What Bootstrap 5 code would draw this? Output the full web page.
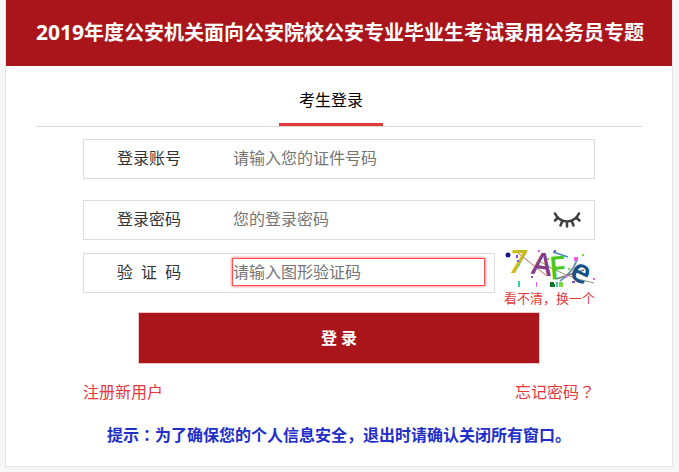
<!DOCTYPE html>
<html lang="zh-CN">
<head>
<meta charset="utf-8">
<meta name="viewport" content="width=device-width, initial-scale=1">
<title>考生登录</title>
<link href="https://cdn.jsdelivr.net/npm/bootstrap@5.3.0/dist/css/bootstrap.min.css" rel="stylesheet">
<style>
body { background: #f6f6f6; font-family: "Open Sans", "Noto Sans CJK SC", sans-serif; font-size: 16px; line-height: 24px; color: #333; }
.mid { font-family: "Noto Sans CJK TC", sans-serif; line-height: 20px; }
.login-panel { margin: 0 6px 4px 5px; background: #fff; border: 1px solid #e6e6e6; border-top: 0; }
.login-head { background: #aa151b; padding: 18px 20px 18px 30px; }
.login-head h1 { font-size: 20px; line-height: 30px; }
.year { font-size: 21px; line-height: 20px; }
.tab-line { margin: 0 30px; padding-top: 20px; border-bottom: 1px solid #d9d9d9; }
.tab-item { padding: 2px 20px 11px; color: #000; border-bottom: 3px solid #e4393c; }
.login-form { margin: 12px 77px 0; }
.field { height: 40px; border: 1px solid #ddd; background: #fff; padding: 0 9px 2px 0; }
.field label { width: 148px; flex: none; padding-right: 18px; text-align: center; white-space: pre; }
.field input { height: 28px; min-width: 0; border: 1px solid transparent; outline: 0; padding: 0; background: transparent; }
.field input::placeholder { color: #757575; opacity: 1; }
.field .alert-input { border-color: #ff4d4d; box-shadow: 0 0 3px #ff4d4d; }
.gap-account { margin-bottom: 21px; }
.gap-password { margin-bottom: 8px; }
.eye-btn { border: 0; background: none; padding: 0; width: 36px; height: 28px; line-height: 0; }
.captcha-row { gap: 9px; }
.captcha-row .field { margin-top: 5px; }
.captcha-side { width: 91px; flex: none; }
.captcha-side svg { display: block; overflow: visible; }
.captcha-side a { display: block; font-size: 13px; line-height: 20px; white-space: nowrap; }
.red-link { color: #e4393c; text-decoration: none; }
.login-btn { margin: 4px 55px 0; height: 52px; background: #aa151b; border: 1px solid #efc6c8; color: #fff; font-weight: 700; }
.login-links { margin-top: 16px; }
.login-tip { margin: 19px 0 0; padding-bottom: 19px; color: #222ec8; font-weight: 700; }
</style>
<script src="https://cdn.jsdelivr.net/npm/bootstrap@5.3.0/dist/js/bootstrap.bundle.min.js"></script>
</head>
<body>
<main class="login-panel">
  <header class="login-head text-white">
    <h1 class="fw-bold m-0 text-nowrap"><span class="year">2019</span>年度公安机关面向公安院校公安专业毕业生考试录用公务员专题</h1>
  </header>
  <div class="tab-line d-flex justify-content-center">
    <div class="tab-item me-3">考生登录</div>
  </div>
  <form class="login-form">
    <div class="field gap-account d-flex align-items-center">
      <label for="account">登录账号</label>
      <input id="account" class="flex-fill" type="text" placeholder="请输入您的证件号码">
    </div>
    <div class="field gap-password d-flex align-items-center">
      <label for="password">登录密码</label>
      <input id="password" class="flex-fill" type="password" placeholder="您的登录密码">
      <button class="eye-btn" type="button" aria-label="显示密码">
        <svg width="30" height="20" viewBox="0 0 30 20" fill="none" stroke="#3c3c3c" stroke-width="2.5" stroke-linecap="round"><path d="M3 4.500C8 15 22 15 27 4.500M6 8.500L3 11.500M10.500 11.500L8.500 16.500M15 12.500V17.500M19.500 11.500L21.500 16.500M24 8.500L27.500 11.500"/></svg>
      </button>
    </div>
    <div class="captcha-row d-flex align-items-start">
      <div class="field flex-fill d-flex align-items-center">
        <label for="code">验  证  码</label>
        <input id="code" class="alert-input flex-fill" type="text" placeholder="请输入图形验证码">
      </div>
      <div class="captcha-side">
        <svg width="91" height="40" viewBox="0 0 91 40" role="img" aria-label="验证码图片">
          <g fill="none" stroke-width="1">
            <path stroke="#b86b62" d="M14 5L43 28"/>
            <path stroke="#8f9463" d="M35 13Q60 29 90 35"/>
            <path stroke="#3a8fa8" stroke-width="1.500" d="M49 4L64 9"/>
            <path stroke="#6698b5" stroke-width="2" d="M73 12Q68 25 56 33"/>
            <path stroke="#777" stroke-width="1.500" d="M52 31L80 22"/>
          </g>
          <g font-family="Open Sans, sans-serif" font-weight="600">
            <text x="5" y="25" font-size="32" font-style="italic" fill="#c5bd1c">7</text>
            <text x="28" y="27" font-size="31" fill="#853d86" transform="rotate(8 38 16)">A</text>
            <text x="45" y="31" font-size="32" fill="#49c91d" transform="rotate(-5 53 20)">F</text>
            <text x="66" y="34" font-size="33" fill="#174f87" transform="rotate(25 75 27)">e</text>
          </g>
          <circle cx="4" cy="7" r="2.500" fill="#18188c"/>
          <path fill="#8050db" d="M12 7h2v3h-2zM27 28h2v2h-2zM50 2h2v2h-2zM68 33h3v2h-3zM13 12h2v2h-2zM30 20h3v1h-3z"/>
          <path fill="#e65de8" d="M70 9h4v4h-4zM34 2h2v2h-2zM61 27h2v3h-2zM32 34h1v5h-1zM89 30h2v2h-2z"/>
          <path fill="#79da42" d="M14 16h2v2h-2zM78 6h2v2h-2zM64 20h2v2h-2zM55 34h4v5h-4zM43 10h2v2h-2z"/>
          <path fill="#187525" d="M46 34h4v5h-4zM50 36h1v3h-1z"/>
          <path fill="#35d3a6" d="M14 33h2v6h-2zM52 34h2v5h-2z"/>
        </svg>
        <a class="red-link" href="#">看不清，换一个</a>
      </div>
    </div>
    <div class="d-flex">
      <button class="login-btn flex-fill" type="submit">登 录</button>
    </div>
    <div class="login-links d-flex justify-content-between">
      <a class="red-link" href="#">注册新用户</a>
      <a class="red-link" href="#">忘记密码<span class="mid" lang="zh-TW">？</span></a>
    </div>
  </form>
  <p class="login-tip text-center">提示<span class="mid" lang="zh-TW">：</span>为了确保您的个人信息安全，退出时请确认关闭所有窗口。</p>
</main>
</body>
</html>
